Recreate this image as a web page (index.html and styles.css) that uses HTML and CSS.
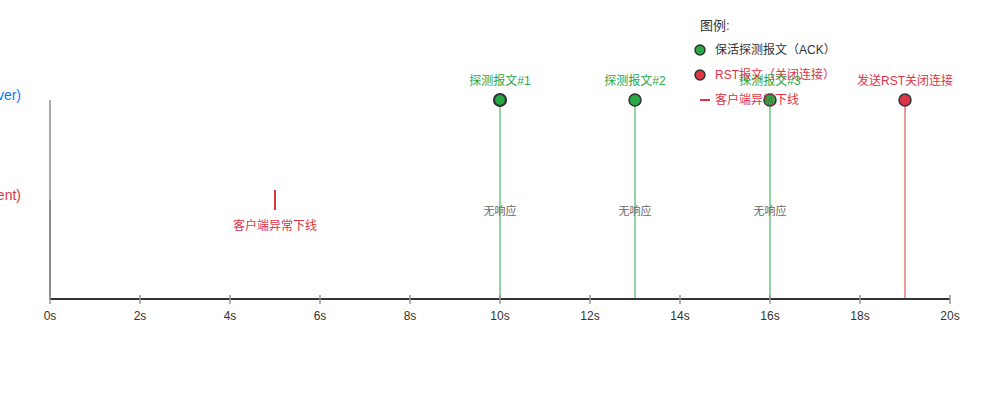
FILE: index.html
```html
<!DOCTYPE html>
<html lang="zh-CN">
<head>
<meta charset="utf-8">
<title>TCP Keepalive</title>
<link rel="stylesheet" href="styles.css">
</head>
<body>
<div class="chart">
<svg class="canvas" width="1000" height="400" viewBox="0 0 1000 400" xmlns="http://www.w3.org/2000/svg">
  <!-- lane labels -->
  <text class="lane lane-server" x="21" y="100" text-anchor="end">服务端 (Server)</text>
  <text class="lane lane-client" x="21" y="200" text-anchor="end">客户端 (Client)</text>

  <!-- lane axis -->
  <line class="lane-line-top" x1="50" y1="100" x2="50" y2="300"/>
  <line class="lane-line-bottom" x1="50" y1="200" x2="50" y2="300"/>

  <!-- event stems -->
  <line class="stem-green" x1="500" y1="100" x2="500" y2="299"/>
  <line class="stem-green" x1="635" y1="100" x2="635" y2="299"/>
  <line class="stem-green" x1="770" y1="100" x2="770" y2="299"/>
  <line class="stem-red" x1="905" y1="100" x2="905" y2="299"/>

  <!-- time axis -->
  <line class="axis" x1="50" y1="299" x2="950" y2="299"/>
  <g class="ticks">
    <line x1="50" y1="295" x2="50" y2="304"/>
    <line x1="140" y1="295" x2="140" y2="304"/>
    <line x1="230" y1="295" x2="230" y2="304"/>
    <line x1="320" y1="295" x2="320" y2="304"/>
    <line x1="410" y1="295" x2="410" y2="304"/>
    <line x1="500" y1="295" x2="500" y2="304"/>
    <line x1="590" y1="295" x2="590" y2="304"/>
    <line x1="680" y1="295" x2="680" y2="304"/>
    <line x1="770" y1="295" x2="770" y2="304"/>
    <line x1="860" y1="295" x2="860" y2="304"/>
    <line x1="950" y1="295" x2="950" y2="304"/>
  </g>
  <g class="tick-labels">
    <text x="50" y="320">0s</text>
    <text x="140" y="320">2s</text>
    <text x="230" y="320">4s</text>
    <text x="320" y="320">6s</text>
    <text x="410" y="320">8s</text>
    <text x="500" y="320">10s</text>
    <text x="590" y="320">12s</text>
    <text x="680" y="320">14s</text>
    <text x="770" y="320">16s</text>
    <text x="860" y="320">18s</text>
    <text x="950" y="320">20s</text>
  </g>

  <!-- client offline -->
  <line class="offline-mark" x1="275" y1="190" x2="275" y2="210"/>
  <text class="label-red" x="275" y="230">客户端异常下线</text>

  <!-- probes -->
  <circle class="dot-green dot-strong" cx="500" cy="100" r="6"/>
  <circle class="dot-green" cx="635" cy="100" r="6"/>
  <circle class="dot-green" cx="770" cy="100" r="6"/>
  <circle class="dot-red" cx="905" cy="100" r="6"/>

  <text class="label-green" x="500" y="85">探测报文#1</text>
  <text class="label-green" x="635" y="85">探测报文#2</text>
  <text class="label-red" x="905" y="85">发送RST关闭连接</text>

  <text class="no-reply" x="500" y="215">无响应</text>
  <text class="no-reply" x="635" y="215">无响应</text>
  <text class="no-reply" x="770" y="215">无响应</text>

  <!-- legend -->
  <g class="legend">
    <text class="legend-title" x="700" y="30">图例:</text>
    <circle class="dot-green" cx="700" cy="50" r="5"/>
    <text class="legend-text" x="715" y="54">保活探测报文（ACK）</text>
    <circle class="dot-red" cx="700" cy="75" r="5"/>
    <text class="legend-text legend-red" x="715" y="79">RST报文（关闭连接）</text>
    <line class="legend-dash" x1="700" y1="100" x2="710" y2="100"/>
    <text class="legend-text legend-red" x="715" y="104">客户端异常下线</text>
  </g>

  <text class="label-green" x="770" y="85">探测报文#3</text>
</svg>
</div>
</body>
</html>
```

FILE: styles.css
```css
html, body {
  margin: 0;
  padding: 0;
  background: #ffffff;
}

.chart {
  width: 1000px;
  height: 400px;
  overflow: hidden;
}

.canvas {
  display: block;
  font-family: "Liberation Sans", "Noto Sans CJK SC", Arial, sans-serif;
}

.lane {
  font-size: 14px;
}

.lane-server {
  fill: #007bff;
}

.lane-client {
  fill: #dc3545;
}

.lane-line-top {
  stroke: #aaaaaa;
  stroke-width: 2;
}

.lane-line-bottom {
  stroke: #888888;
  stroke-width: 2;
}

.stem-green {
  stroke: #28a745;
  stroke-opacity: 0.5;
  stroke-width: 2;
}

.stem-red {
  stroke: #dc3545;
  stroke-opacity: 0.5;
  stroke-width: 2;
}

.axis {
  stroke: #333333;
  stroke-width: 2;
}

.ticks line {
  stroke: #999999;
  stroke-width: 1.5;
}

.tick-labels text {
  fill: #333333;
  font-size: 12px;
  text-anchor: middle;
}

.offline-mark {
  stroke: #dc3545;
  stroke-width: 2;
}

.dot-green {
  fill: #28a745;
  stroke: #333333;
  stroke-width: 1.5;
}

.dot-strong {
  stroke-width: 2.2;
}

.dot-red {
  fill: #dc3545;
  stroke: #333333;
  stroke-width: 1.5;
}

.label-green {
  fill: #28a745;
  font-size: 12px;
  text-anchor: middle;
}

.label-red {
  fill: #dc3545;
  font-size: 12px;
  text-anchor: middle;
}

.no-reply {
  fill: #666666;
  font-size: 11px;
  text-anchor: middle;
}

.legend-title {
  fill: #333333;
  font-size: 13px;
}

.legend-text {
  fill: #333333;
  font-size: 12px;
}

.legend-red {
  fill: #dc3545;
}

.legend-dash {
  stroke: #dc3545;
  stroke-width: 2;
}
```
